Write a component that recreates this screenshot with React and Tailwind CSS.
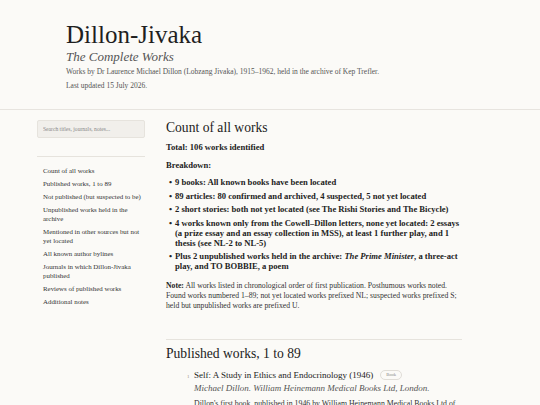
import React from "react";

const navItems = [
  "Count of all works",
  "Published works, 1 to 89",
  "Not published (but suspected to be)",
  "Unpublished works held in the archive",
  "Mentioned in other sources but not yet located",
  "All known author bylines",
  "Journals in which Dillon-Jivaka published",
  "Reviews of published works",
  "Additional notes",
];

function Bullet({ children }) {
  return (
    <li className="flex">
      <span className="w-[9px] shrink-0 pl-[3px]">•</span>
      <span>{children}</span>
    </li>
  );
}

export default function App() {
  return (
    <div className="min-h-screen bg-[#fbfaf7] text-[#222] font-['Liberation_Serif',serif]">
      {/* header */}
      <header className="border-b border-[#e7e4df] pl-[66px] pt-[21px] pb-[18px]">
        <h1 className="text-[25px] leading-[28px] text-[#1f1f1f]">Dillon-Jivaka</h1>
        <p className="italic text-[13px] leading-[16px] text-[#555]">The Complete Works</p>
        <p className="mt-[2px] text-[7.5px] leading-[10px] text-[#555]">
          Works by Dr Laurence Michael Dillon (Lobzang Jivaka), 1915–1962, held in the archive of Kep Trefler.
        </p>
        <p className="mt-[4px] text-[7.5px] leading-[10px] text-[#555]">Last updated 15 July 2026.</p>
      </header>

      <div className="flex gap-[21px] pl-[37px] pt-[10px]">
        {/* sidebar */}
        <aside className="w-[108px] shrink-0">
          <input
            type="text"
            placeholder="Search titles, journals, notes..."
            className="block h-[18px] w-full rounded-[2px] border border-[#e6e3dd] bg-[#f1efeb] px-[5px] text-[5.6px] placeholder:text-[#888] focus:outline-none"
          />
          <div className="mt-[18px] border-t border-[#e6e3dd]" />
          <ul className="mt-[9px] flex flex-col gap-[4px] pl-[6px] text-[6.9px] leading-[9px] text-[#333]">
            {navItems.map((item) => (
              <li key={item}>{item}</li>
            ))}
          </ul>
        </aside>

        {/* main */}
        <main className="w-[296px] shrink-0">
          <h2 className="text-[13.6px] leading-[16px]">Count of all works</h2>
          <p className="mt-[6px] text-[8.6px] leading-[10px] font-bold">Total: 106 works identified</p>
          <p className="mt-[8px] text-[8.6px] leading-[10px] font-bold">Breakdown:</p>
          <ul className="mt-[7px] flex flex-col gap-[3.5px] text-[8.6px] leading-[10px] font-bold">
            <Bullet>9 books: All known books have been located</Bullet>
            <Bullet>89 articles: 80 confirmed and archived, 4 suspected, 5 not yet located</Bullet>
            <Bullet>2 short stories: both not yet located (see The Rishi Stories and The Bicycle)</Bullet>
            <Bullet>
              4 works known only from the Cowell–Dillon letters, none yet located: 2 essays (a prize essay and an
              essay collection in MSS), at least 1 further play, and 1 thesis (see NL-2 to NL-5)
            </Bullet>
            <Bullet>
              Plus 2 unpublished works held in the archive: <i>The Prime Minister</i>, a three-act play, and TO
              BOBBIE, a poem
            </Bullet>
          </ul>
          <p className="mt-[10px] text-[7.7px] leading-[10px] text-[#333]">
            <b className="text-[#222]">Note:</b> All works listed in chronological order of first publication.
            Posthumous works noted. Found works numbered 1–89; not yet located works prefixed NL; suspected works
            prefixed S; held but unpublished works are prefixed U.
          </p>

          <div className="mt-[28px] border-t border-[#e6e3dd]" />

          <h2 className="mt-[6px] text-[13.6px] leading-[16px]">Published works, 1 to 89</h2>
          <ol className="mt-[7px] pl-[21px]">
            <li className="flex">
              <span className="w-[7px] shrink-0 pt-[4px] text-[5px] leading-[8px] text-[#a09080]">1</span>
              <div>
                <div className="flex items-center text-[9px] leading-[12px]">
                  <span>Self: A Study in Ethics and Endocrinology (1946)</span>
                  <span className="ml-[7px] rounded-full border border-[#e0ddd7] px-[5px] text-[4.5px] leading-[8px] text-[#888]">
                    Book
                  </span>
                </div>
                <p className="mt-[2px] italic text-[9px] leading-[11px] text-[#555]">
                  Michael Dillon. William Heinemann Medical Books Ltd, London.
                </p>
                <p className="mt-[4px] text-[7.8px] leading-[11px] text-[#333]">
                  Dillon's first book, published in 1946 by William Heinemann Medical Books Ltd of London, written
                  while he was a medical student.
                </p>
              </div>
            </li>
          </ol>
        </main>
      </div>
    </div>
  );
}
